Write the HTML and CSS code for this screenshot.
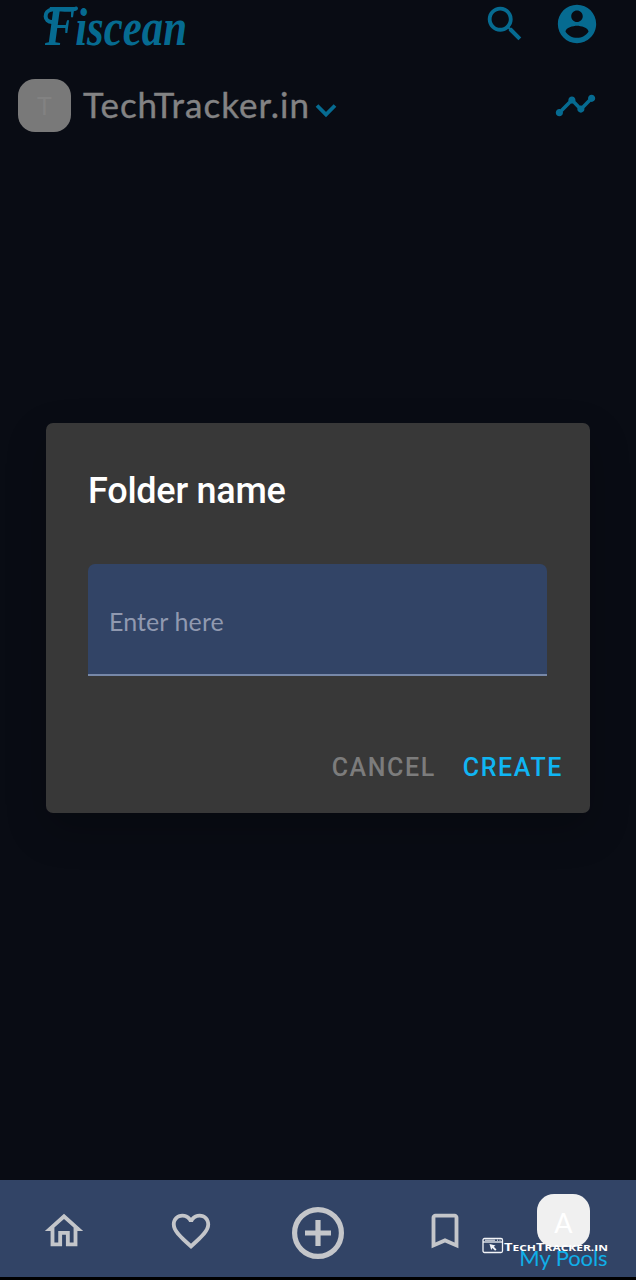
FILE: index.html
```html
<!DOCTYPE html>
<html lang="en">
<head>
<meta charset="utf-8">
<title>Fiscean</title>
<link rel="stylesheet" href="styles.css">
</head>
<body>
<div class="app">
  <header class="topbar">
    <svg class="logo" viewBox="0 0 150 50"><text class="logo-text" x="3" y="45" textLength="142" lengthAdjust="spacingAndGlyphs"><tspan class="logo-cap">F</tspan>iscean</text><path class="logo-swash" d="M10 22C2 22 1 11 10 9.500c7-1 18 2 24-1"/></svg>
    <div class="actions">
      <svg class="icon" viewBox="0 0 24 24"><path d="M15.5 14h-.79l-.28-.27C15.41 12.59 16 11.11 16 9.5 16 5.91 13.09 3 9.5 3S3 5.91 3 9.5 5.91 16 9.5 16c1.61 0 3.09-.59 4.23-1.57l.27.28v.79l5 4.99L20.49 19l-4.99-5zm-6 0C7.01 14 5 11.99 5 9.5S7.01 5 9.5 5 14 7.01 14 9.5 11.99 14 9.5 14z"/></svg>
      <svg class="icon" viewBox="0 0 24 24"><path d="M12 2C6.48 2 2 6.48 2 12s4.48 10 10 10 10-4.48 10-10S17.52 2 12 2zm0 3c1.66 0 3 1.34 3 3s-1.34 3-3 3-3-1.34-3-3 1.34-3 3-3zm0 14.2c-2.5 0-4.71-1.28-6-3.22.03-1.99 4-3.08 6-3.08 1.99 0 5.97 1.09 6 3.08-1.29 1.94-3.5 3.22-6 3.22z"/></svg>
    </div>
  </header>
  <section class="account">
    <div class="avatar avatar-dim">T</div>
    <h1 class="account-name">TechTracker.in</h1>
    <svg class="chevron" viewBox="0 0 22 15"><path d="M2 2.5l9 9 9-9"/></svg>
    <svg class="icon trend" viewBox="0 0 24 24"><path d="M23 8c0 1.100-.9 2-2 2-.18 0-.35-.02-.51-.07l-3.560 3.550c.05.16.07.34.07.52 0 1.100-.9 2-2 2s-2-.9-2-2c0-.18.02-.36.07-.52l-2.550-2.550c-.16.05-.34.07-.52.07s-.36-.02-.52-.07l-4.550 4.560c.05.16.07.33.07.51 0 1.100-.9 2-2 2s-2-.9-2-2 .9-2 2-2c.18 0 .35.02.51.07l4.560-4.550C8.020 9.360 8 9.180 8 9c0-1.100.9-2 2-2s2 .9 2 2c0 .18-.02.36-.07.52l2.550 2.550c.16-.05.34-.07.52-.07s.36.02.52.07l3.550-3.560C19.020 8.350 19 8.180 19 8c0-1.100.9-2 2-2s2 .9 2 2z"/></svg>
  </section>
  <main class="content">
    <div class="dialog" role="dialog">
      <h2 class="dialog-title">Folder name</h2>
      <div class="field">Enter here</div>
      <div class="dialog-actions">
        <span class="btn btn-muted">CANCEL</span>
        <span class="btn btn-primary">CREATE</span>
      </div>
    </div>
  </main>
  <nav class="tabs">
    <div class="tab"><svg class="tab-icon" viewBox="0 0 24 24"><path d="M12 5.690l5 4.500V18h-2v-6H9v6H7v-7.810l5-4.500M12 3L2 12h3v8h6v-6h2v6h6v-8h3L12 3z"/></svg></div>
    <div class="tab"><svg class="tab-icon" viewBox="0 0 24 24"><path d="M16.500 3c-1.740 0-3.410.81-4.500 2.090C10.910 3.810 9.240 3 7.500 3 4.420 3 2 5.420 2 8.500c0 3.780 3.400 6.860 8.550 11.540L12 21.350l1.450-1.320C18.600 15.360 22 12.280 22 8.500 22 5.420 19.580 3 16.500 3zm-4.400 15.550l-.1.100-.1-.1C7.140 14.240 4 11.390 4 8.500 4 6.500 5.500 5 7.500 5c1.540 0 3.040.99 3.570 2.360h1.870C13.460 5.990 14.960 5 16.500 5c2 0 3.500 1.500 3.500 3.500 0 2.890-3.140 5.740-7.900 10.050z"/></svg></div>
    <div class="tab tab-add"><svg class="add-icon" viewBox="0 0 52 52"><circle cx="26" cy="26" r="23.400"/><path d="M26 13v26M13 26h26"/></svg></div>
    <div class="tab"><svg class="tab-icon" viewBox="0 0 24 24"><path d="M17 3H7c-1.100 0-2 .9-2 2v16l7-3 7 3V5c0-1.100-.9-2-2-2zm0 15l-5-2.180L7 18V5h10v13z"/></svg></div>
    <div class="tab tab-pools">
      <div class="avatar avatar-light">A</div>
      <span class="pools-label">My Pools</span>
    </div>
  </nav>
  <svg class="watermark" viewBox="0 0 128 18">
    <rect class="wm-line" x="1" y="1.500" width="19.500" height="14" rx="1.500"/>
    <path class="wm-line" d="M1 5h19.500"/>
    <path class="wm-dots" d="M3 3.200h10M15 3.200h1M17.500 3.200h1"/>
    <path class="wm-fill" d="M7.500 7l6 1.500-1.700 1.200 2.700 2.700-1.400 1.300-2.700-2.700-1.200 2z"/>
    <text class="wm-text" x="22" y="13.800" textLength="104" lengthAdjust="spacingAndGlyphs"><tspan class="wm-cap">T</tspan>ECH<tspan class="wm-cap">T</tspan>RACKER.IN</text>
  </svg>
</div>
</body>
</html>
```
FILE: styles.css
```css
* { box-sizing: border-box; }
body { margin: 0; background: #000; font-family: Lato, sans-serif; }
.app {
  position: relative;
  width: 636px;
  height: 1280px;
  display: flex;
  flex-direction: column;
  background: #090c14;
  overflow: hidden;
}
.topbar {
  height: 52px;
  padding: 0 36px 0 42px;
  display: flex;
  justify-content: space-between;
  align-items: flex-start;
}
.logo { width: 150px; height: 50px; overflow: visible; }
.logo-text {
  font: italic bold 53px "Liberation Serif", serif;
  fill: #066b91;
}
.logo-cap { font-size: 56px; }
.logo-swash { fill: none; stroke: #066b91; stroke-width: 4; stroke-linecap: round; }
.actions { display: flex; gap: 26px; padding-top: 1px; }
.icon { width: 46px; height: 46px; fill: #066b91; }
.account {
  height: 106px;
  padding: 0 38px 0 18px;
  display: flex;
  align-items: center;
}
.avatar {
  width: 53px;
  height: 53px;
  border-radius: 17px;
  display: flex;
  align-items: center;
  justify-content: center;
}
.avatar-dim { background: #797979; color: #828282; font-size: 25px; }
.account-name {
  margin: -3px 0 0 12px;
  width: 226px;
  font-size: 35px;
  font-weight: 400;
  line-height: 44px;
  letter-spacing: 1px;
  white-space: nowrap;
  color: #838384;
  -webkit-text-stroke: 0.4px #838384;
}
.chevron { width: 22px; height: 15px; margin: 10px 0 0 6px; }
.chevron path { fill: none; stroke: #066b91; stroke-width: 3.8; }
.trend { width: 43px; height: 43px; margin-left: auto; margin-right: 1px; }
.content { flex: 1; padding: 265px 46px 0; }
.dialog {
  height: 390px;
  padding: 43px 28px 0 42px;
  border-radius: 7px;
  background: #383838;
  box-shadow: 0 16px 40px rgba(0, 0, 0, 0.22);
}
.dialog-title {
  margin: 0;
  font: 500 36px/50px Roboto, sans-serif;
  letter-spacing: -0.25px;
  color: #fff;
}
.field {
  height: 112px;
  margin: 48px 15px 0 0;
  padding: 4px 21px 0;
  display: flex;
  align-items: center;
  border-bottom: 2px solid #7788a8;
  border-radius: 7px 7px 0 0;
  background: #324466;
  color: #9099b0;
  font-size: 25px;
  letter-spacing: 0.1px;
}
.dialog-actions {
  display: flex;
  justify-content: flex-end;
  gap: 28px;
  padding-top: 72px;
}
.btn { font: 500 25px/40px Roboto, sans-serif; letter-spacing: 1.6px; margin-right: -1px; }
.btn-muted { color: #7c7c7c; }
.btn-primary { color: #10b5f3; }
.tabs {
  height: 100px;
  display: grid;
  grid-template-columns: repeat(5, 1fr);
  border-bottom: 3px solid #000;
  background: #324466;
}
.tab { display: flex; justify-content: center; padding-top: 28px; }
.tab-icon { width: 46px; height: 46px; fill: #c4c6ca; }
.tab-add { padding-top: 27px; }
.add-icon { width: 52px; height: 52px; fill: none; stroke: #c4c6ca; stroke-width: 5.2; }
.tab-pools {
  flex-direction: column;
  justify-content: flex-start;
  align-items: center;
  padding: 14px 18px 0 0;
}
.avatar-light { background: #f0f0f0; color: #fff; font-size: 27px; padding-top: 3px; }
.pools-label {
  margin-top: -3px;
  font-size: 22px;
  line-height: 28px;
  letter-spacing: -0.1px;
  white-space: nowrap;
  color: #10aee8;
}
.watermark { position: absolute; left: 482px; top: 1237px; width: 128px; height: 18px; }
.wm-line { fill: none; stroke: #f2f4f8; stroke-width: 1.3; }
.wm-dots { stroke: #f2f4f8; stroke-width: 1; }
.wm-fill { fill: #f2f4f8; }
.wm-text { font: bold 9px "Open Sans", sans-serif; fill: #fff; }
.wm-cap { font-size: 11px; }
```
